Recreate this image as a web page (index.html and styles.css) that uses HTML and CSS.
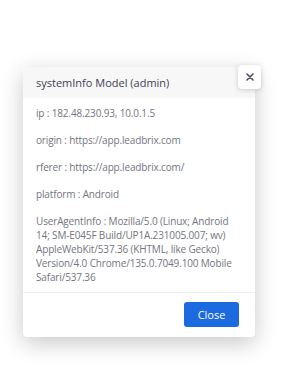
FILE: index.html
```html
<!DOCTYPE html>
<html>
<head>
<meta charset="utf-8">
<link rel="stylesheet" href="styles.css">
</head>
<body>
<div class="modal">
  <div class="modal-header">
    <span class="title">systemInfo Model (admin)</span>
    <button class="close-x" aria-label="close">
      <svg width="8" height="8" viewBox="0 0 8 8"><path d="M1 1L7 7M7 1L1 7" stroke="#444a5c" stroke-width="1.5" stroke-linecap="round"/></svg>
    </button>
  </div>
  <div class="modal-body">
    <p>ip : 182.48.230.93, 10.0.1.5</p>
    <p>origin : https://app.leadbrix.com</p>
    <p>rferer : https://app.leadbrix.com/</p>
    <p>platform : Android</p>
    <p>UserAgentInfo : Mozilla/5.0 (Linux; Android 14; SM-E045F Build/UP1A.231005.007; wv) AppleWebKit/537.36 (KHTML, like Gecko) Version/4.0 Chrome/135.0.7049.100 Mobile Safari/537.36</p>
  </div>
  <div class="modal-footer">
    <button class="btn-close">Close</button>
  </div>
</div>
</body>
</html>
```
FILE: styles.css
```css
html, body {
  margin: 0;
  padding: 0;
  background: #ffffff;
  width: 286px;
  height: 381px;
  overflow: hidden;
}
body {
  font-family: "Open Sans", sans-serif;
  padding-top: 67px;
  padding-left: 23px;
  box-sizing: border-box;
}
.modal {
  position: relative;
  width: 232px;
  background: #fff;
  border-radius: 4px;
  box-shadow: 0 6px 22px rgba(0,0,0,0.22);
}
.modal-header {
  height: 31px;
  background: #f7f7f8;
  border-radius: 4px 4px 0 0;
  display: flex;
  align-items: center;
  padding: 0 13px;
}
.title {
  font-size: 11px;
  color: #3f4150;
}
.close-x {
  position: absolute;
  top: -2px;
  right: -6px;
  width: 23px;
  height: 24px;
  background: #fff;
  border: none;
  border-radius: 4px;
  box-shadow: 0 1px 5px rgba(0,0,0,0.18);
  display: flex;
  align-items: center;
  justify-content: center;
  padding: 0;
}
.modal-body {
  padding: 8px 13px 8px;
}
.modal-body p {
  margin: 0 0 13px;
  font-size: 10px;
  letter-spacing: -0.15px;
  line-height: 14px;
  color: #737580;
}
.modal-body p:last-child {
  margin-bottom: 0;
}
.modal-footer {
  border-top: 1px solid #f0f0f2;
  padding: 9px 16px 10px;
  display: flex;
  justify-content: flex-end;
}
.btn-close {
  width: 55px;
  height: 25px;
  background: #1b6ae0;
  color: #fff;
  border: none;
  border-radius: 3px;
  font-family: "Open Sans", sans-serif;
  font-size: 11px;
  padding: 0;
}
```
